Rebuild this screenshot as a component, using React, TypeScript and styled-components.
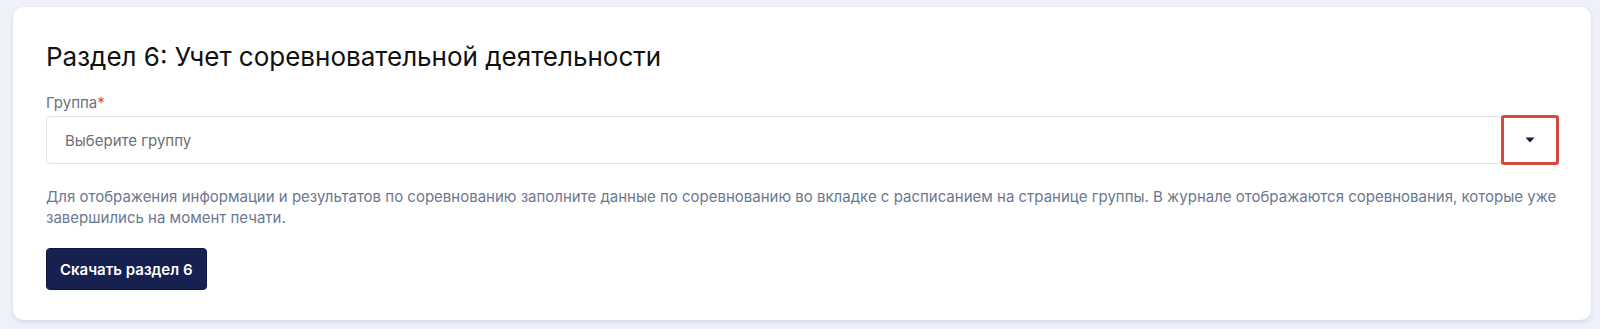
import React from "react";
import styled, { createGlobalStyle } from "styled-components";

const Global = createGlobalStyle`
  html, body { margin: 0; padding: 0; background: #eef1fa; }
  body { font-family: Inter, "Noto Sans", sans-serif; }
  * { box-sizing: border-box; }
`;

const Page = styled.div`
  padding: 7px 9px 10px 13px;
`;

const Card = styled.section`
  background: #ffffff;
  border-radius: 10px;
  box-shadow: 0 2px 4px rgba(30, 40, 90, 0.12);
  padding: 34px 33px 30px 33px;
  display: flex;
  flex-direction: column;
`;

const Title = styled.h2`
  margin: 0;
  font-size: 26px;
  font-weight: 400;
  line-height: 32px;
  color: #111111;
`;

const Field = styled.div`
  margin-top: 21px;
  display: flex;
  flex-direction: column;
  gap: 4px;
`;

const Label = styled.label`
  font-size: 15px;
  line-height: 18px;
  color: #6b7280;
`;

const Required = styled.span`
  color: #ef4444;
`;

const Select = styled.div`
  height: 48px;
  border: 1px solid #dfe2e8;
  border-radius: 4px;
  display: flex;
  align-items: center;
  justify-content: space-between;
  padding-left: 18px;
`;

const Placeholder = styled.span`
  font-size: 15px;
  color: #6b6f78;
`;

const ArrowBox = styled.div`
  position: relative;
  width: 56px;
  height: 48px;
  margin-right: -1px;
  display: flex;
  align-items: center;
  justify-content: center;
  &::after {
    content: "";
    position: absolute;
    inset: -1px;
    border: 3px solid #d6483c;
    border-radius: 3px;
  }
`;

const Help = styled.p`
  margin: 22px 0 0 0;
  font-size: 15px;
  line-height: 21px;
  color: #6b7890;
`;

const Button = styled.button`
  align-self: flex-start;
  margin-top: 20px;
  height: 42px;
  padding: 0 13px;
  background: #172150;
  color: #ffffff;
  border: 1px solid #0e1640;
  border-radius: 4px;
  font-family: Inter, "Noto Sans", sans-serif;
  font-size: 15px;
  font-weight: 600;
  cursor: pointer;
`;

export default function App() {
  return (
    <>
      <Global />
      <Page>
        <Card>
          <Title>Раздел 6: Учет соревновательной деятельности</Title>
          <Field>
            <Label>
              Группа<Required>*</Required>
            </Label>
            <Select>
              <Placeholder>Выберите группу</Placeholder>
              <ArrowBox>
                <svg width="10" height="6" viewBox="0 0 10 6">
                  <path d="M0.5 0.5 L9.5 0.5 L5 5.5 Z" fill="#131c4a" />
                </svg>
              </ArrowBox>
            </Select>
          </Field>
          <Help>
            Для отображения информации и результатов по соревнованию заполните данные по соревнованию во вкладке с расписанием на странице группы. В журнале отображаются соревнования, которые уже завершились на момент печати.
          </Help>
          <Button>Скачать раздел 6</Button>
        </Card>
      </Page>
    </>
  );
}
